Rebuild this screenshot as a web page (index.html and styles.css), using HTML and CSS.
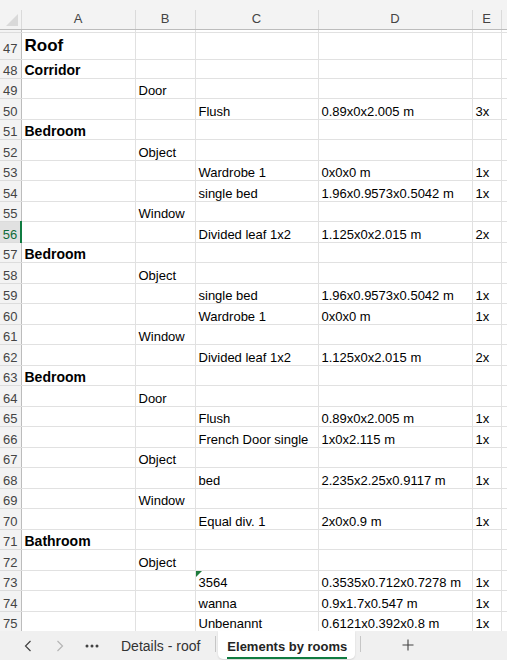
FILE: index.html
```html
<!DOCTYPE html>
<html lang="en">
<head>
  <meta charset="UTF-8" />
  <meta name="viewport" content="width=device-width, initial-scale=1.0"/>
  <title>Elements by rooms</title>
  <link rel="stylesheet" href="styles.css">
</head>
<body>
  <div class="sheet">
    <div class="grid-wrap">
      <table class="cells">
        <colgroup>
          <col class="w-hdr"><col class="w-a"><col class="w-b"><col class="w-c"><col class="w-d"><col class="w-e"><col class="w-f">
        </colgroup>
        <thead>
          <tr class="top-band"><th colspan="7"></th></tr>
          <tr class="letters">
            <th class="corner">
              <svg width="14" height="14" viewBox="0 0 14 14"><polygon points="13,1 13,13 1,13" fill="#d9d9d9"/></svg>
            </th>
            <th>A</th><th>B</th><th>C</th><th>D</th><th>E</th><th></th>
          </tr>
        </thead>
        <tbody>
          <tr class="peek"><th></th><td></td><td></td><td></td><td></td><td></td><td></td></tr>
          <tr class="tall"><th>47</th><td class="title">Roof</td><td></td><td></td><td></td><td></td><td></td></tr>
          <tr class="short"><th>48</th><td class="room">Corridor</td><td></td><td></td><td></td><td></td><td></td></tr>
          <tr><th>49</th><td></td><td>Door</td><td></td><td></td><td></td><td></td></tr>
          <tr><th>50</th><td></td><td></td><td>Flush</td><td>0.89x0x2.005 m</td><td>3x</td><td></td></tr>
          <tr><th>51</th><td class="room">Bedroom</td><td></td><td></td><td></td><td></td><td></td></tr>
          <tr><th>52</th><td></td><td>Object</td><td></td><td></td><td></td><td></td></tr>
          <tr><th>53</th><td></td><td></td><td>Wardrobe 1</td><td>0x0x0 m</td><td>1x</td><td></td></tr>
          <tr><th>54</th><td></td><td></td><td>single bed</td><td>1.96x0.9573x0.5042 m</td><td>1x</td><td></td></tr>
          <tr><th>55</th><td></td><td>Window</td><td></td><td></td><td></td><td></td></tr>
          <tr class="active"><th>56</th><td></td><td></td><td>Divided leaf 1x2</td><td>1.125x0x2.015 m</td><td>2x</td><td></td></tr>
          <tr><th>57</th><td class="room">Bedroom</td><td></td><td></td><td></td><td></td><td></td></tr>
          <tr><th>58</th><td></td><td>Object</td><td></td><td></td><td></td><td></td></tr>
          <tr><th>59</th><td></td><td></td><td>single bed</td><td>1.96x0.9573x0.5042 m</td><td>1x</td><td></td></tr>
          <tr><th>60</th><td></td><td></td><td>Wardrobe 1</td><td>0x0x0 m</td><td>1x</td><td></td></tr>
          <tr><th>61</th><td></td><td>Window</td><td></td><td></td><td></td><td></td></tr>
          <tr><th>62</th><td></td><td></td><td>Divided leaf 1x2</td><td>1.125x0x2.015 m</td><td>2x</td><td></td></tr>
          <tr><th>63</th><td class="room">Bedroom</td><td></td><td></td><td></td><td></td><td></td></tr>
          <tr><th>64</th><td></td><td>Door</td><td></td><td></td><td></td><td></td></tr>
          <tr><th>65</th><td></td><td></td><td>Flush</td><td>0.89x0x2.005 m</td><td>1x</td><td></td></tr>
          <tr><th>66</th><td></td><td></td><td>French Door single</td><td>1x0x2.115 m</td><td>1x</td><td></td></tr>
          <tr><th>67</th><td></td><td>Object</td><td></td><td></td><td></td><td></td></tr>
          <tr><th>68</th><td></td><td></td><td>bed</td><td>2.235x2.25x0.9117 m</td><td>1x</td><td></td></tr>
          <tr><th>69</th><td></td><td>Window</td><td></td><td></td><td></td><td></td></tr>
          <tr><th>70</th><td></td><td></td><td>Equal div. 1</td><td>2x0x0.9 m</td><td>1x</td><td></td></tr>
          <tr><th>71</th><td class="room">Bathroom</td><td></td><td></td><td></td><td></td><td></td></tr>
          <tr><th>72</th><td></td><td>Object</td><td></td><td></td><td></td><td></td></tr>
          <tr><th>73</th><td></td><td></td><td class="flag">3564</td><td>0.3535x0.712x0.7278 m</td><td>1x</td><td></td></tr>
          <tr><th>74</th><td></td><td></td><td>wanna</td><td>0.9x1.7x0.547 m</td><td>1x</td><td></td></tr>
          <tr><th>75</th><td></td><td></td><td>Unbenannt</td><td>0.6121x0.392x0.8 m</td><td>1x</td><td></td></tr>
        </tbody>
      </table>
    </div>

    <div class="tabs">
      <span class="nav-btn">
        <svg width="8" height="12" viewBox="0 0 8 12"><polyline points="6.5,1 1.5,6 6.5,11" fill="none" stroke="#424242" stroke-width="1.2"/></svg>
      </span>
      <span class="nav-btn">
        <svg width="8" height="12" viewBox="0 0 8 12"><polyline points="1.5,1 6.5,6 1.5,11" fill="none" stroke="#b5b5b5" stroke-width="1.2"/></svg>
      </span>
      <span class="nav-btn">
        <svg width="14" height="4" viewBox="0 0 14 4"><circle cx="2" cy="2" r="1.5" fill="#424242"/><circle cx="7" cy="2" r="1.5" fill="#424242"/><circle cx="12" cy="2" r="1.5" fill="#424242"/></svg>
      </span>
      <span class="tab">Details - roof</span>
      <span class="tab-sep"></span>
      <span class="tab tab-active"><span class="tab-label">Elements by rooms</span></span>
      <span class="tab-sep"></span>
      <span class="add-btn">
        <svg width="12" height="12" viewBox="0 0 12 12"><path d="M6 0.5v11M0.5 6h11" stroke="#424242" stroke-width="1.1"/></svg>
      </span>
    </div>
  </div>
</body>
</html>
```

FILE: styles.css
```css
* {
  box-sizing: border-box;
}

body {
  margin: 0;
  background: #fff;
  font-family: "Liberation Sans", Arial, sans-serif;
  color: #000;
}

.sheet {
  width: 507px;
  height: 660px;
  overflow: hidden;
  display: flex;
  flex-direction: column;
}

.grid-wrap {
  height: 631px;
  overflow: hidden;
  flex: none;
}

/* grid */
.cells {
  border-collapse: collapse;
  table-layout: fixed;
  width: 561px;
}

.w-hdr { width: 21px; }
.w-a { width: 114px; }
.w-b { width: 60px; }
.w-c { width: 123px; }
.w-d { width: 154px; }
.w-e { width: 29px; }
.w-f { width: 60px; }

thead th {
  background: #f3f3f3;
  font-weight: normal;
  font-size: 13px;
  color: #444;
  padding: 0;
}

.top-band th {
  height: 10px;
  border: none;
}

.letters th {
  height: 19px;
  line-height: 18px;
  text-align: center;
  border-right: 1px solid #dadada;
  border-bottom: 1px solid #bcbcbc;
}

.letters .corner {
  text-align: left;
  vertical-align: bottom;
  line-height: 0;
  padding-left: 5px;
  padding-bottom: 2px;
}

td {
  border-right: 1px solid #e1e1e1;
  border-bottom: 1px solid #e1e1e1;
  padding: 0 3px;
  font-size: 13px;
  line-height: 15px;
  white-space: nowrap;
  vertical-align: bottom;
}

tbody th {
  background: #f3f3f3;
  border-right: 1px solid #bcbcbc;
  border-bottom: 1px solid #dcdcdc;
  font-weight: normal;
  font-size: 13px;
  line-height: 15px;
  color: #444;
  text-align: center;
  vertical-align: bottom;
  padding: 0;
}

tbody tr {
  height: 20.5px;
}

tbody tr.peek {
  height: 3px;
}

tbody tr.tall {
  height: 27px;
}

tbody tr.short {
  height: 19px;
}

.tall th {
  padding-bottom: 3px;
}

.title {
  font-size: 17px;
  font-weight: bold;
  line-height: 20px;
  padding-bottom: 3px;
}

.room {
  font-size: 14px;
  font-weight: bold;
}

tr.active th {
  background: #e1e1e1;
  color: #0e6b3a;
  border-right: 2px solid #107c41;
}

.flag {
  position: relative;
}

.flag::before {
  content: "";
  position: absolute;
  top: 0;
  left: 0;
  border-top: 6px solid #1e7b3c;
  border-right: 6px solid transparent;
}

/* sheet tabs */
.tabs {
  flex: 1;
  background: #f0f0f0;
  display: flex;
  align-items: stretch;
  padding-left: 12px;
  font-size: 14px;
  color: #333;
}

.nav-btn {
  width: 32px;
  display: flex;
  align-items: center;
  justify-content: center;
}

.tab {
  display: flex;
  align-items: center;
  padding: 0 15px 0 13px;
  white-space: nowrap;
}

.tab-sep {
  width: 1px;
  background: #c6c6c6;
  margin: 5px 0 8px;
}

.tab-active {
  background: #fff;
  margin: 0 5px 1px 2px;
  padding: 0 8px 0 9px;
  border-radius: 0 0 5px 5px;
  box-shadow: 0 1px 2px rgba(0, 0, 0, 0.12);
  font-size: 13px;
  font-weight: bold;
  color: #242424;
}

.tab-label {
  padding: 3px 0 3px;
  border-bottom: 2px solid #107c41;
  margin-top: 4px;
}

.add-btn {
  width: 94px;
  display: flex;
  align-items: center;
  justify-content: center;
  padding-bottom: 2px;
}
```
